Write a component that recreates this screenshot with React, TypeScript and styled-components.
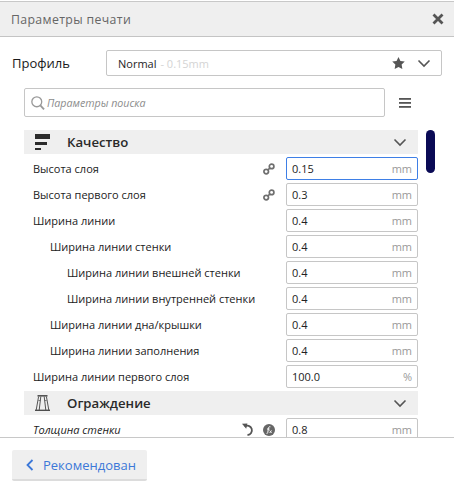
import React from 'react';
import styled, { createGlobalStyle } from 'styled-components';

const GlobalStyle = createGlobalStyle`
  html, body {
    margin: 0;
    padding: 0;
    background: #fff;
  }
  body {
    font-family: "Open Sans", "Noto Sans", sans-serif;
    color: #1e1e1e;
  }
`;

const Window = styled.div`
  width: 454px;
  height: 490px;
  display: flex;
  flex-direction: column;
  overflow: hidden;
  background: #fff;
`;

const TitleBar = styled.div`
  height: 34px;
  margin-top: 1px;
  border-top: 1px solid #c8c8c8;
  border-bottom: 1px solid #c4c4c4;
  background: #efefef;
  display: flex;
  align-items: center;
  justify-content: space-between;
  padding: 0 10px 0 11px;
  flex: none;
`;

const Title = styled.span`
  font-size: 12.3px;
  letter-spacing: 0.35px;
  color: #666;
`;

const ProfileRow = styled.div`
  display: flex;
  align-items: center;
  padding: 13px 12px 0 12px;
  flex: none;
`;

const ProfileLabel = styled.span`
  width: 94px;
  font-size: 13px;
  color: #1a1a1a;
`;

const ProfileSelect = styled.div`
  width: 336px;
  height: 26px;
  box-sizing: border-box;
  border: 1px solid #c6c6c6;
  border-radius: 2px;
  display: flex;
  align-items: center;
  padding: 0 10px 0 11px;
  font-size: 11px;
`;

const Muted = styled.span`
  color: #d4d4d4;
  margin-left: 4px;
  flex: 1;
`;

const SearchRow = styled.div`
  display: flex;
  align-items: center;
  padding: 12px 0 0 24px;
  flex: none;
`;

const SearchBox = styled.div`
  width: 361px;
  height: 29px;
  box-sizing: border-box;
  border: 1px solid #c6c6c6;
  border-radius: 2px;
  display: flex;
  align-items: center;
  gap: 2px;
  padding: 0 6px;
  font-size: 10.7px;
  font-style: italic;
  color: #8c8c8c;
`;

const MenuButton = styled.div`
  margin-left: 14px;
  display: flex;
`;

const Body = styled.div`
  flex: none;
  height: 307px;
  margin-top: 13px;
  padding-left: 24px;
  display: flex;
  overflow: hidden;
`;

const List = styled.div`
  width: 394px;
  flex: none;
`;

const ScrollTrack = styled.div`
  margin-left: 8px;
`;

const ScrollThumb = styled.div`
  width: 9px;
  height: 43px;
  border-radius: 5px;
  background: #0a0a55;
`;

const SectionHeader = styled.div`
  height: 24px;
  background: #efefef;
  display: flex;
  align-items: center;
  padding: 0 11px 0 11px;
  margin-bottom: 3px;
`;

const SectionIcon = styled.div`
  width: 32px;
  display: flex;
`;

const SectionTitle = styled.span`
  flex: 1;
  font-size: 13.2px;
  font-weight: 600;
  color: #2a2a2a;
`;

const Row = styled.div`
  height: 23px;
  margin-bottom: 3px;
  display: flex;
  align-items: center;
`;

const RowLabel = styled.span<{ $depth: number; $italic?: boolean }>`
  flex: 1;
  padding-left: ${(p) => 9 + p.$depth * 17}px;
  font-size: 11px;
  font-style: ${(p) => (p.$italic ? 'italic' : 'normal')};
  color: #222;
  white-space: nowrap;
`;

const RowIcons = styled.div`
  display: flex;
  align-items: center;
  gap: 8px;
  margin-right: 11px;
`;

const ValueBox = styled.div<{ $active?: boolean }>`
  width: 132px;
  height: 23px;
  box-sizing: border-box;
  flex: none;
  border: 1px solid ${(p) => (p.$active ? '#3e7fe6' : '#c6c6c6')};
  border-radius: 2px;
  display: flex;
  align-items: center;
  justify-content: space-between;
  padding: 0 5px;
  font-size: 11px;
  color: #222;
`;

const Unit = styled.span`
  color: #999;
`;

const Footer = styled.div`
  flex: 1;
  border-top: 1px solid #c8c8c8;
  padding: 12px 12px 0;
`;

const BackButton = styled.div`
  width: 135px;
  height: 31px;
  box-sizing: border-box;
  background: #efefef;
  border-bottom: 2px solid #dcdcdc;
  border-radius: 2px;
  display: flex;
  align-items: center;
  gap: 9px;
  padding-left: 14px;
  font-size: 13px;
  color: #3c78d8;
`;

const Chevron = () => (
  <svg width="14" height="9" viewBox="0 0 14 9" fill="none">
    <path d="M1.5 1.5 7 7l5.5-5.5" stroke="#555" strokeWidth="1.6" />
  </svg>
);

const LinkIcon = () => (
  <svg width="12" height="12" viewBox="0 0 12 12" fill="none" stroke="#6f6f6f" strokeWidth="1.7">
    <circle cx="3.2" cy="8.6" r="2.3" />
    <circle cx="8.6" cy="3.4" r="2.3" />
    <path d="M4.6 7.2 7.2 4.8" />
  </svg>
);

const ResetIcon = () => (
  <svg width="13" height="13" viewBox="0 0 13 13" fill="none">
    <path d="M2.6 3.4A4.7 4.7 0 1 1 5.5 12" stroke="#555" strokeWidth="1.8" />
    <path d="M0 .8 5.4 .4 4.2 5.8Z" fill="#555" />
  </svg>
);

const FormulaIcon = () => (
  <svg width="12" height="12" viewBox="0 0 12 12">
    <circle cx="6" cy="6" r="6" fill="#666" />
    <path d="M7.4 2.8C6 2.4 5.6 3.2 5.4 4.6L4.8 8.4C4.6 9.4 4.2 9.6 3.6 9.4M4 5H6.6" stroke="#fff" strokeWidth="1" fill="none" />
    <path d="M6.6 6.4 8.6 9M8.6 6.4 6.6 9" stroke="#fff" strokeWidth=".8" fill="none" />
  </svg>
);

const QualityIcon = () => (
  <svg width="15" height="16" viewBox="0 0 15 16" fill="#2b2b2b">
    <rect x="0" y="0" width="15" height="5" />
    <rect x="0" y="8" width="12" height="3" />
    <rect x="0" y="14" width="6" height="2" />
  </svg>
);

const ShellIcon = () => (
  <svg width="15" height="16" viewBox="0 0 15 16" fill="none" stroke="#555" strokeWidth="1">
    <path d="M2.5 .8h10" strokeWidth="1.6" />
    <path d="M3.6 1.5 1.2 15M5.8 1.5 4.2 15M9.2 1.5 10.8 15M11.4 1.5 13.8 15" />
    <path d="M3.4 5.5h2M9.6 5.5h2" strokeWidth=".7" />
    <path d="M0 15.3h15" strokeWidth="1.3" stroke="#444" />
  </svg>
);

const rows = [
  { label: 'Высота слоя', depth: 0, value: '0.15', unit: 'mm', linked: true, active: true },
  { label: 'Высота первого слоя', depth: 0, value: '0.3', unit: 'mm', linked: true },
  { label: 'Ширина линии', depth: 0, value: '0.4', unit: 'mm' },
  { label: 'Ширина линии стенки', depth: 1, value: '0.4', unit: 'mm' },
  { label: 'Ширина линии внешней стенки', depth: 2, value: '0.4', unit: 'mm' },
  { label: 'Ширина линии внутренней стенки', depth: 2, value: '0.4', unit: 'mm' },
  { label: 'Ширина линии дна/крышки', depth: 1, value: '0.4', unit: 'mm' },
  { label: 'Ширина линии заполнения', depth: 1, value: '0.4', unit: 'mm' },
  { label: 'Ширина линии первого слоя', depth: 0, value: '100.0', unit: '%' },
];

export default function App() {
  return (
    <Window>
      <GlobalStyle />
      <TitleBar>
        <Title>Параметры печати</Title>
        <svg width="12" height="12" viewBox="0 0 12 12">
          <path d="M1.5 1.5l9 9M10.5 1.5l-9 9" stroke="#555" strokeWidth="2.8" />
        </svg>
      </TitleBar>
      <ProfileRow>
        <ProfileLabel>Профиль</ProfileLabel>
        <ProfileSelect>
          Normal
          <Muted>- 0.15mm</Muted>
          <svg width="13" height="12" viewBox="0 0 24 23" style={{ marginRight: 12 }}>
            <path d="M12 0l3.7 7.6 8.3 1.2-6 5.8 1.4 8.4L12 19l-7.4 4L6 14.6 0 8.8l8.3-1.2z" fill="#555" />
          </svg>
          <Chevron />
        </ProfileSelect>
      </ProfileRow>
      <SearchRow>
        <SearchBox>
          <svg width="14" height="14" viewBox="0 0 15 15" fill="none" stroke="#999">
            <circle cx="6.2" cy="6.2" r="5.3" strokeWidth="1.4" />
            <path d="M10 10 14 14.4" strokeWidth="1.9" />
          </svg>
          Параметры поиска
        </SearchBox>
        <MenuButton>
          <svg width="12" height="10" viewBox="0 0 12 10" fill="#555">
            <rect width="12" height="1.8" />
            <rect y="4" width="12" height="1.8" />
            <rect y="8" width="12" height="1.8" />
          </svg>
        </MenuButton>
      </SearchRow>
      <Body>
        <List>
          <SectionHeader>
            <SectionIcon><QualityIcon /></SectionIcon>
            <SectionTitle>Качество</SectionTitle>
            <Chevron />
          </SectionHeader>
          {rows.map((r) => (
            <Row key={r.label}>
              <RowLabel $depth={r.depth}>{r.label}</RowLabel>
              {r.linked && <RowIcons><LinkIcon /></RowIcons>}
              <ValueBox $active={r.active}>
                {r.value}
                <Unit>{r.unit}</Unit>
              </ValueBox>
            </Row>
          ))}
          <SectionHeader>
            <SectionIcon><ShellIcon /></SectionIcon>
            <SectionTitle>Ограждение</SectionTitle>
            <Chevron />
          </SectionHeader>
          <Row>
            <RowLabel $depth={0} $italic>Толщина стенки</RowLabel>
            <RowIcons><ResetIcon /><FormulaIcon /></RowIcons>
            <ValueBox>
              0.8
              <Unit>mm</Unit>
            </ValueBox>
          </Row>
        </List>
        <ScrollTrack><ScrollThumb /></ScrollTrack>
      </Body>
      <Footer>
        <BackButton>
          <svg width="8" height="12" viewBox="0 0 8 12" fill="none">
            <path d="M6.5 1 1.5 6l5 5" stroke="#3c78d8" strokeWidth="1.8" />
          </svg>
          Рекомендован
        </BackButton>
      </Footer>
    </Window>
  );
}
